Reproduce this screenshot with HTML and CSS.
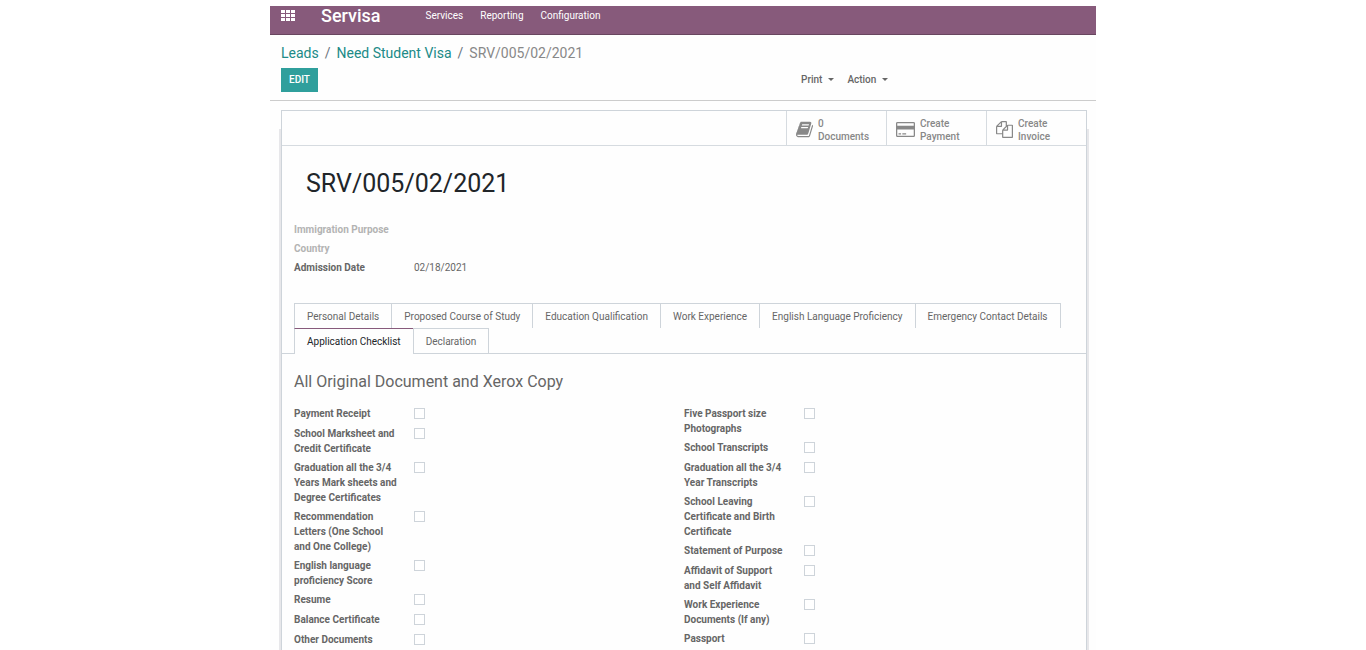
FILE: index.html
```html
<!DOCTYPE html>
<html lang="en">
<head>
<meta charset="utf-8">
<title>SRV/005/02/2021 - Servisa</title>
<link rel="stylesheet" href="styles.css">
</head>
<body>
<div class="app">
  <header class="navbar">
    <button class="apps-button" type="button" aria-label="Applications">
      <svg viewBox="0 0 14 11" width="14" height="11" fill="currentColor">
        <path d="M0 0h4v3H0zM5 0h4v3H5zM10 0h4v3h-4zM0 4h4v3H0zM5 4h4v3H5zM10 4h4v3h-4zM0 8h4v3H0zM5 8h4v3H5zM10 8h4v3h-4z"/>
      </svg>
    </button>
    <a class="brand" href="#">Servisa</a>
    <nav class="nav-links">
      <a href="#">Services</a>
      <a href="#">Reporting</a>
      <a href="#">Configuration</a>
    </nav>
  </header>

  <div class="control-panel">
    <nav class="breadcrumb">
      <a href="#">Leads</a><span class="slash">/</span><a href="#">Need Student Visa</a><span class="slash">/</span><span class="current">SRV/005/02/2021</span>
    </nav>
    <div class="actions">
      <div class="actions-left"><button class="edit-button" type="button">EDIT</button></div>
      <div class="actions-right">
        <button class="dropdown" type="button">Print<span class="caret"></span></button>
        <button class="dropdown" type="button">Action<span class="caret"></span></button>
      </div>
    </div>
  </div>

  <main class="sheet">
    <div class="button-box">
      <button class="stat-button" type="button">
        <svg class="stat-icon" viewBox="0 0 1664 1536" fill="currentColor"><path d="M1639 350q40 57 18 129l-275 906q-19 64-76.500 107.500T1183 1536H260q-77 0-148.500-53.500T12 1351q-24-67-2-127 0-4 3-27t4-37q1-8-3-21.500t-3-19.500q2-11 8-21t16.500-23.500T52 1051q23-38 45-91.500t30-91.500q3-10 .5-30t-.5-28q3-11 17-28t17-23q21-36 42-92t25-90q1-9-2.500-32t.5-28q4-13 22-30.500t22-22.500q19-26 42.500-84.500T340 283q1-8-3-25.500t-2-26.500q2-8 9-18t18-23 17-21q8-12 16.500-30.500t15-35 16-36 19.500-32T469.500 12t36-11.500T553 6l-1 3q38-9 51-9h761q74 0 114 56t18 130l-274 906q-36 119-71.500 153.500T1022 1280H153q-27 0-38 15-11 16-1 43 24 70 144 70h923q29 0 56-15.500t35-41.500l300-987q7-22 5-57 38 15 59 43zM575 352q-4 13 2 22.500t20 9.500h608q13 0 25.500-9.500T1247 352l21-64q4-13-2-22.500t-20-9.500H638q-13 0-25.500 9.500T596 288zm-83 256q-4 13 2 22.500t20 9.500h608q13 0 25.500-9.500T1164 608l21-64q4-13-2-22.500t-20-9.500H555q-13 0-25.500 9.500T513 544z"/></svg>
        <span>0<br>Documents</span>
      </button>
      <button class="stat-button" type="button">
        <svg class="stat-icon wide" viewBox="0 0 1920 1536" fill="currentColor"><path d="M1760 0q66 0 113 47t47 113v1216q0 66-47 113t-113 47H160q-66 0-113-47T0 1376V160Q0 94 47 47T160 0h1600zM160 128q-13 0-22.500 9.500T128 160v224h1664V160q0-13-9.500-22.500T1760 128H160zm1600 1280q13 0 22.500-9.500t9.500-22.500V768H128v608q0 13 9.500 22.500T160 1408h1600zM256 1280v-128h256v128H256zm384 0v-128h384v128H640z"/></svg>
        <span>Create<br>Payment</span>
      </button>
      <button class="stat-button" type="button">
        <svg class="stat-icon" viewBox="0 0 1792 1792" fill="currentColor"><path d="M1696 384q40 0 68 28t28 68v1216q0 40-28 68t-68 28H736q-40 0-68-28t-28-68v-288H96q-40 0-68-28t-28-68V640q0-40 20-88t48-76L476 68q28-28 76-48t88-20h416q40 0 68 28t28 68v328q68-40 128-40h416zm-544 213L853 896h299V597zM512 213L213 512h299V213zm196 647l316-316V128H640v416q0 40-28 68t-68 28H128v640h512v-256q0-40 20-88t48-76zm956 804V512h-384v416q0 40-28 68t-68 28H768v640h896z"/></svg>
        <span>Create<br>Invoice</span>
      </button>
    </div>

    <section class="record">
      <h1>SRV/005/02/2021</h1>
      <dl class="fields">
        <dt class="empty">Immigration Purpose</dt><dd></dd>
        <dt class="empty">Country</dt><dd></dd>
        <dt>Admission Date</dt><dd>02/18/2021</dd>
      </dl>
    </section>

    <div class="tabs" role="tablist">
      <button type="button" role="tab">Personal Details</button>
      <button type="button" role="tab">Proposed Course of Study</button>
      <button type="button" role="tab">Education Qualification</button>
      <button type="button" role="tab">Work Experience</button>
      <button type="button" role="tab">English Language Proficiency</button>
      <button type="button" role="tab">Emergency Contact Details</button>
      <button type="button" role="tab" class="active" aria-selected="true">Application Checklist</button>
      <button type="button" role="tab">Declaration</button>
    </div>

    <section class="checklist">
      <h2>All Original Document and Xerox Copy</h2>
      <div class="columns">
        <div class="column">
          <div class="check"><label for="a1">Payment Receipt</label><input type="checkbox" id="a1"></div>
          <div class="check"><label for="a2">School Marksheet and Credit Certificate</label><input type="checkbox" id="a2"></div>
          <div class="check"><label for="a3">Graduation all the 3/4 Years Mark sheets and Degree Certificates</label><input type="checkbox" id="a3"></div>
          <div class="check"><label for="a4">Recommendation Letters (One School and One College)</label><input type="checkbox" id="a4"></div>
          <div class="check"><label for="a5">English language proficiency Score</label><input type="checkbox" id="a5"></div>
          <div class="check"><label for="a6">Resume</label><input type="checkbox" id="a6"></div>
          <div class="check"><label for="a7">Balance Certificate</label><input type="checkbox" id="a7"></div>
          <div class="check"><label for="a8">Other Documents</label><input type="checkbox" id="a8"></div>
        </div>
        <div class="column">
          <div class="check"><label for="b1">Five Passport size Photographs</label><input type="checkbox" id="b1"></div>
          <div class="check"><label for="b2">School Transcripts</label><input type="checkbox" id="b2"></div>
          <div class="check"><label for="b3">Graduation all the 3/4 Year Transcripts</label><input type="checkbox" id="b3"></div>
          <div class="check"><label for="b4">School Leaving Certificate and Birth Certificate</label><input type="checkbox" id="b4"></div>
          <div class="check"><label for="b5">Statement of Purpose</label><input type="checkbox" id="b5"></div>
          <div class="check"><label for="b6">Affidavit of Support and Self Affidavit</label><input type="checkbox" id="b6"></div>
          <div class="check"><label for="b7">Work Experience Documents (If any)</label><input type="checkbox" id="b7"></div>
          <div class="check"><label for="b8">Passport</label><input type="checkbox" id="b8"></div>
        </div>
      </div>
    </section>
  </main>
</div>
</body>
</html>
```
FILE: styles.css
```css
* { box-sizing: border-box; }

html { height: 100%; background: #fff; }

body {
  height: 100%;
  margin: 0;
  padding-top: 6px;
  overflow: hidden;
  font: 10px/15px Roboto, "Liberation Sans", sans-serif;
  color: #666;
}

button {
  margin: 0;
  padding: 0;
  border: 0;
  background: none;
  font: inherit;
  color: inherit;
}

a { text-decoration: none; color: inherit; }

.app {
  display: flex;
  flex-direction: column;
  max-width: 826px;
  height: 100%;
  margin: 0 auto;
  background: #fefefe;
}

.navbar {
  display: flex;
  align-items: center;
  flex: none;
  height: 29px;
  padding: 0 11px 9px;
  background: #875a7b;
  border-bottom: 1px solid #68465f;
  color: #fff;
}

.apps-button { display: flex; }

.brand {
  margin: 0 45px 0 26px;
  font-size: 18px;
  font-weight: 500;
  line-height: 20px;
}

.nav-links { display: flex; gap: 17px; }

.control-panel {
  flex: none;
  padding: 9px 11px 8px;
  border-bottom: 1px solid #ccc;
}

.breadcrumb {
  font-size: 14px;
  line-height: 18px;
  color: #888;
}

.breadcrumb a { color: #208a87; }

.slash { padding: 0 6px; color: #6c757d; }

.actions {
  display: grid;
  grid-template-columns: 520px 1fr;
  align-items: center;
  margin-top: 6px;
}

.edit-button {
  height: 24px;
  padding: 0 8px 1px;
  background: #2f9f9c;
  color: #fff;
  font-weight: 500;
}

.actions-left, .actions-right { display: flex; }

.actions-right { gap: 13px; padding-bottom: 2px; }

.dropdown {
  display: flex;
  align-items: center;
  gap: 6px;
  font-weight: 500;
}

.caret {
  border: 3px solid transparent;
  border-top-color: currentColor;
  border-bottom: 0;
}

.sheet {
  position: relative;
  z-index: 0;
  flex: 1 0 auto;
  margin: 9px 9px 0 11px;
  background: #fefefe;
  border: 1px solid #ced4da;
  border-bottom: 0;
}

/* Soft edge on both sides of the sheet */
.sheet::before,
.sheet::after {
  content: "";
  position: absolute;
  top: 18px;
  bottom: 0;
  width: 2px;
  background: #e7e7ea;
}

.sheet::before { left: -3px; }
.sheet::after { right: -3px; }

.button-box {
  display: flex;
  justify-content: flex-end;
  height: 35px;
  border-bottom: 1px solid #d6dbe0;
}

.stat-button {
  display: flex;
  align-items: center;
  gap: 5px;
  width: 100px;
  padding: 3px 0 0 9px;
  border-left: 1px solid #d6dbe0;
  font-weight: 500;
  line-height: 13px;
  text-align: left;
  color: #888;
}

.stat-icon { flex: none; width: 17px; height: 17px; }

.stat-icon.wide { width: 19px; }

.record { padding: 21px 12px 0; }

h1 {
  margin: 0 12px;
  font-size: 25px;
  font-weight: 400;
  line-height: 34px;
  color: #212529;
}

.fields {
  display: grid;
  grid-template-columns: 120px 1fr;
  grid-auto-rows: 15px;
  row-gap: 4px;
  margin: 21px 0 28px;
}

dt { font-weight: 700; }

dt.empty { color: #b3b3b3; }

dd { margin: 0; }

.tabs {
  display: flex;
  flex-wrap: wrap;
  padding: 0 12px;
  border-bottom: 1px solid #ced4da;
}

.tabs button {
  height: 25px;
  margin-right: -1px;
  padding: 0 12px;
  border: 1px solid #ced4da;
  border-bottom: 0;
}

.tabs .active {
  height: 26px;
  margin-bottom: -1px;
  border-top-color: #875a7b;
  background: #fefefe;
  color: #212529;
}

.checklist { padding: 18px 12px 0; }

h2 {
  margin: 0 0 14px;
  font-size: 16px;
  font-weight: 400;
  line-height: 20px;
}

.columns {
  display: grid;
  grid-template-columns: 1fr 1fr;
}

.check {
  display: grid;
  grid-template-columns: 105px auto;
  column-gap: 15px;
  align-items: start;
  justify-content: start;
  min-height: 20px;
  padding-bottom: 4px;
}

.check label { font-weight: 700; }

.check input {
  appearance: none;
  width: 11px;
  height: 11px;
  margin: 2px 0;
  border: 1px solid #ced4da;
  background: #fff;
}
```
